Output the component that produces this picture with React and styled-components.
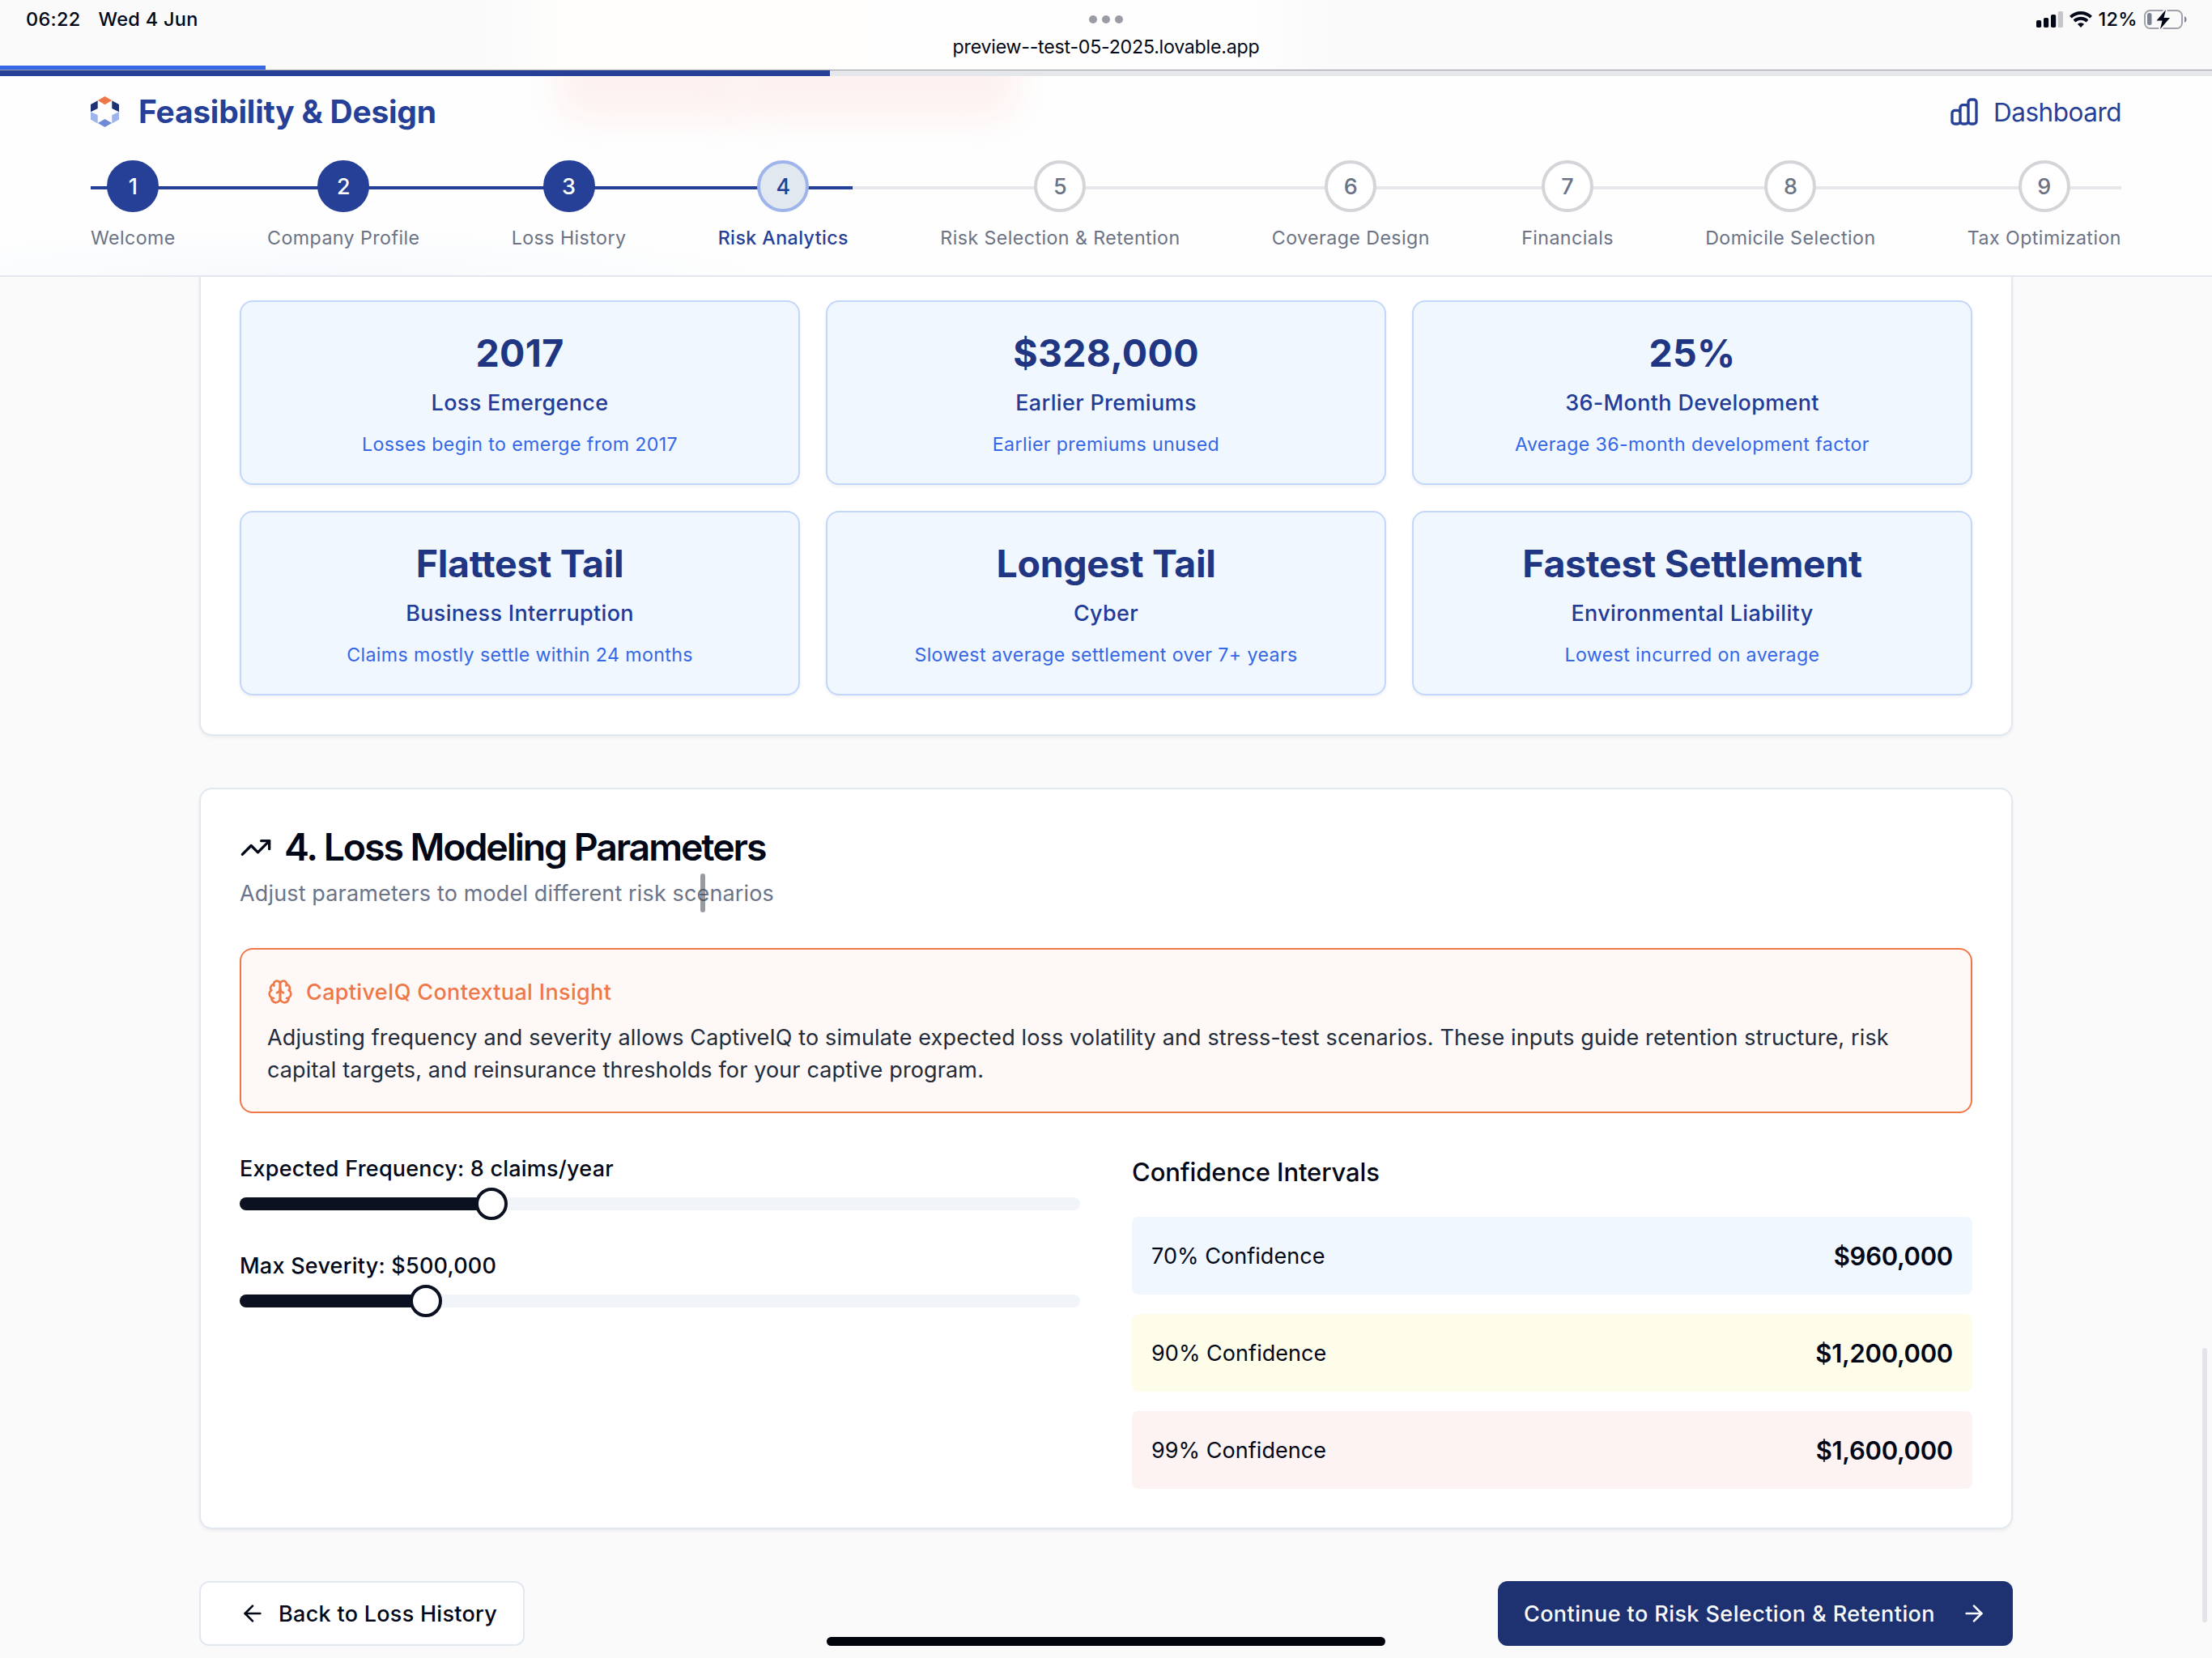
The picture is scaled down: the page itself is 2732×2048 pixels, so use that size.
import React from "react";
import styled, { createGlobalStyle } from "styled-components";
import { TrendingUp, ArrowLeft, ArrowRight } from "lucide-react";

const GlobalStyle = createGlobalStyle`
  * { box-sizing: border-box; }
  html, body { margin: 0; padding: 0; }
  body {
    width: 2732px;
    height: 2048px;
    overflow: hidden;
    background: #fafafa;
    color: #020817;
    font-family: Inter, Roboto, "Liberation Sans", sans-serif;
  }
  h1, h2, h3, p { margin: 0; font-weight: inherit; }
  svg { display: block; flex: none; }
`;

const Screen = styled.div`
  position: relative;
  width: 2732px;
  height: 2048px;
  overflow: hidden;
  display: flex;
  flex-direction: column;
`;

/* ---------- Status bar ---------- */
const StatusBar = styled.div`
  position: relative;
  height: 87px;
  flex: none;
  display: grid;
  grid-template-columns: 1fr auto 1fr;
  padding: 0 30px;
  background: linear-gradient(90deg, #fafafa 0, #fafafa 600px, #fffefd 700px, #fffefe 1540px, #fafafa 1640px);
  border-bottom: 1px solid #999ca5;
`;
const StatusText = styled.div`
  font-size: 23.5px;
  font-weight: 500;
  line-height: 48px;
  letter-spacing: 0.3px;
  white-space: pre;
`;
const StatusLeft = styled.div`
  display: flex;
  gap: 22px;
  padding-left: 2px;
`;
const StatusCenter = styled.div`
  display: flex;
  flex-direction: column;
  align-items: center;
`;
const Dots = styled.div`
  display: flex;
  gap: 6px;
  padding-top: 19px;
`;
const Dot = styled.i`
  width: 10px;
  height: 10px;
  border-radius: 50%;
  background: #9a9ca5;
`;
const Url = styled.div`
  margin-top: 13px;
  font-size: 23.2px;
  line-height: 32px;
  letter-spacing: -0.24px;
`;
const StatusRight = styled.div`
  display: flex;
  justify-content: flex-end;
  align-items: center;
  gap: 8px;
  height: 48px;
`;
const LoadBar = styled.div`
  position: absolute;
  left: 0;
  bottom: 0;
  width: 328px;
  height: 5px;
  background: #3567e6;
`;

/* ---------- Header ---------- */
const Header = styled.header`
  position: relative;
  height: 255px;
  flex: none;
  overflow: hidden;
  border-bottom: 2px solid #e2e7f0;
  background: radial-gradient(ellipse 620px 60px at 380px 255px, #f6f9fc, rgba(255, 255, 255, 0)), #fefefe;
`;
const Glow = styled.div`
  position: absolute;
  left: ${(p) => p.$x}px;
  top: -60px;
  width: ${(p) => p.$w}px;
  height: 120px;
  border-radius: 30px;
  background: #fdf2f0;
  filter: blur(20px);
`;
const Progress = styled.div`
  position: relative;
  height: 7px;
  background: #e5e7eb;
`;
const ProgressFill = styled.div`
  width: 37.5%;
  height: 100%;
  background: #263f97;
`;
const HeaderBody = styled.div`
  position: relative;
  padding: 16px 112px 0;
`;
const Brand = styled.div`
  display: flex;
  align-items: center;
  justify-content: space-between;
  height: 56px;
  color: #263f97;
`;
const BrandGroup = styled.div`
  display: flex;
  align-items: center;
  gap: ${(p) => p.$gap}px;
`;
const BrandTitle = styled.h1`
  padding-bottom: 2px;
  font-size: 39px;
  font-weight: 700;
  letter-spacing: -0.25px;
`;
const DashboardText = styled.span`
  font-size: 31.5px;
  letter-spacing: -0.5px;
`;
const Steps = styled.nav`
  position: relative;
  display: flex;
  justify-content: space-between;
  margin-top: 32px;
`;
const StepLine = styled.div`
  position: absolute;
  top: 32px;
  left: 0;
  height: 4px;
  width: ${(p) => p.$width};
  background: ${(p) => p.$color};
`;
const Step = styled.div`
  position: relative;
  display: flex;
  flex-direction: column;
  align-items: center;
  gap: 16px;
`;
const tones = {
  done: ["#263f97", "#263f97", "#ffffff"],
  current: ["#9fb4ea", "#e2e8f0", "#263f97"],
  todo: ["#d4d4d9", "#ffffff", "#6b7385"],
};
const StepCircle = styled.div`
  display: flex;
  align-items: center;
  justify-content: center;
  width: 64px;
  height: 64px;
  border-radius: 50%;
  border: 4px solid ${(p) => tones[p.$state][0]};
  background: ${(p) => tones[p.$state][1]};
  color: ${(p) => tones[p.$state][2]};
  font-size: 27px;
  font-weight: 500;
`;
const StepLabel = styled.span`
  font-size: 23.2px;
  line-height: 32px;
  white-space: nowrap;
  letter-spacing: 0.43px;
  font-weight: ${(p) => (p.$state === "current" ? 500 : 400)};
  color: ${(p) => (p.$state === "current" ? "#263f97" : "#6b7385")};
`;

/* ---------- Content ---------- */
const Main = styled.main`
  display: flex;
  flex-direction: column;
  gap: 64px;
  padding: 0 246px;
`;
const Card = styled.section`
  border: 2px solid #e2e8f0;
  border-radius: 16px;
  background: #ffffff;
  padding: 48px;
  box-shadow: 0 2px 4px rgba(15, 23, 42, 0.06);
`;
const ScrolledCard = styled(Card)`
  border-top: 0;
  border-radius: 0 0 16px 16px;
  padding-top: 29px;
`;
const StatGrid = styled.div`
  display: grid;
  grid-template-columns: repeat(3, 1fr);
  gap: 32px;
`;
const Stat = styled.article`
  display: flex;
  flex-direction: column;
  align-items: center;
  height: 228px;
  padding: 31px 32px 32px;
  border: 2px solid #c2d7fa;
  border-radius: 16px;
  background: #f0f7ff;
  box-shadow: 0 2px 4px rgba(15, 23, 42, 0.06);
`;
const StatValue = styled.div`
  font-size: 46.5px;
  font-weight: 700;
  line-height: 64px;
  letter-spacing: ${(p) => (p.$numeric ? 0.3 : -0.3)}px;
  color: #203682;
`;
const StatName = styled.div`
  margin-top: 10px;
  font-size: 27px;
  font-weight: 500;
  line-height: 40px;
  letter-spacing: 0.33px;
  color: #223c98;
`;
const StatNote = styled.div`
  margin-top: 15px;
  font-size: 23.2px;
  line-height: 32px;
  letter-spacing: 0.37px;
  color: #3567e6;
`;
const TitleRow = styled.div`
  display: flex;
  align-items: center;
  gap: 15px;
  height: 48px;
`;
const CardTitle = styled.h2`
  padding-bottom: 2px;
  font-size: 46.5px;
  font-weight: 600;
  line-height: 46px;
  letter-spacing: -2.12px;
`;
const CardText = styled.p`
  margin-top: 13px;
  font-size: 27px;
  line-height: 40px;
  letter-spacing: 0.145px;
  color: #6b7488;
`;
const Insight = styled.div`
  height: 204px;
  margin-top: 47px;
  padding: 32px;
  border: 2px solid #ef7848;
  border-radius: 16px;
  background: #fef8f6;
`;
const InsightHead = styled.div`
  display: flex;
  align-items: center;
  gap: 16px;
  height: 40px;
  color: #ef7848;
`;
const InsightTitle = styled.h3`
  padding-top: 2px;
  font-size: 27px;
  font-weight: 500;
  line-height: 40px;
  letter-spacing: 0.33px;
`;
const InsightText = styled.p`
  margin-top: 17px;
  font-size: 27px;
  line-height: 40px;
  letter-spacing: 0.135px;
  white-space: nowrap;
  color: #222c3b;
`;
const Columns = styled.div`
  display: grid;
  grid-template-columns: 1fr 1fr;
  gap: 64px;
  margin-top: 48px;
`;
const Sliders = styled.div`
  display: flex;
  flex-direction: column;
  gap: 36px;
`;
const SliderLabel = styled.div`
  padding-top: 1px;
  margin-bottom: 3px;
  font-size: 27px;
  font-weight: 500;
  line-height: 40px;
  letter-spacing: 0.23px;
`;
const SliderBody = styled.div`
  position: relative;
  display: flex;
  align-items: center;
  height: 40px;
`;
const Track = styled.div`
  width: 100%;
  height: 16px;
  border-radius: 8px;
  overflow: hidden;
  background: #f1f4f9;
`;
const Range = styled.div`
  height: 100%;
  background: #0b1120;
`;
const Thumb = styled.div`
  position: absolute;
  top: 0;
  width: 40px;
  height: 40px;
  border-radius: 50%;
  border: 4px solid #0b1120;
  background: #ffffff;
`;
const Intervals = styled.div`
  display: flex;
  flex-direction: column;
  gap: 24px;
`;
const IntervalsTitle = styled.h3`
  padding-top: 1px;
  margin-bottom: 7px;
  font-size: 31px;
  font-weight: 500;
  line-height: 48px;
  letter-spacing: -0.1px;
`;
const Interval = styled.div`
  display: flex;
  align-items: center;
  justify-content: space-between;
  height: 96px;
  padding: 0 24px;
  border-radius: 8px;
  background: ${(p) => p.$bg};
`;
const IntervalName = styled.span`
  font-size: 27px;
  letter-spacing: 0.05px;
`;
const IntervalValue = styled.span`
  font-size: 31px;
  font-weight: 600;
  letter-spacing: -0.32px;
`;
const Actions = styled.div`
  display: flex;
  justify-content: space-between;
`;
const Button = styled.button`
  display: flex;
  align-items: center;
  justify-content: flex-end;
  gap: ${(p) => (p.$primary ? 32 : 16)}px;
  width: ${(p) => (p.$primary ? 636 : 402)}px;
  height: 80px;
  padding: 0 32px;
  border: ${(p) => (p.$primary ? "0" : "2px solid #e2e8f0")};
  border-radius: 12px;
  background: ${(p) => (p.$primary ? "#1e3170" : "#ffffff")};
  color: ${(p) => (p.$primary ? "#f8fafc" : "#020817")};
  font-family: inherit;
  font-size: 27px;
  font-weight: 500;
  letter-spacing: ${(p) => (p.$primary ? 0.42 : 0.28)}px;
  white-space: nowrap;
`;

/* ---------- System overlays ---------- */
const HomeIndicator = styled.div`
  position: absolute;
  left: 1021px;
  top: 2022px;
  width: 690px;
  height: 11px;
  border-radius: 6px;
  background: #02040c;
`;
const ScrollThumb = styled.div`
  position: absolute;
  left: 2720px;
  top: 1665px;
  width: 6px;
  height: 339px;
  border-radius: 3px;
  background: #e3e4ea;
`;
const TextCursor = styled.div`
  position: absolute;
  left: 865px;
  top: 1079px;
  width: 6px;
  height: 48px;
  border-radius: 3px;
  background: rgba(70, 72, 85, 0.55);
`;

const Logo = () => (
  <svg width="35" height="38" viewBox="0 0 35 38">
    <path fill="#f07645" d="M17.5 0 26.2 5l-8.700 5.300L8.800 5z" />
    <path fill="#1f3175" d="M0 10 8.700 5.200v9.900L0 19.300zM35 10l-8.700-4.800v9.900l8.700 4.200z" />
    <path fill="#9fb4ea" d="M0 19.300l8.700 3.700v10.500L0 28.700zM35 19.300l-8.700 3.700v10.500l8.700-4.800z" />
    <path fill="#6f8bd8" d="M17.500 28 26.200 33l-8.700 5-8.700-5z" />
  </svg>
);

const ChartIcon = () => (
  <svg width="40" height="40" viewBox="0 0 24 24" fill="none" stroke="currentColor" strokeWidth="2" strokeLinecap="round" strokeLinejoin="round">
    <path d="M9 19v-6a2 2 0 00-2-2H5a2 2 0 00-2 2v6a2 2 0 002 2h2a2 2 0 002-2zm0 0V9a2 2 0 012-2h2a2 2 0 012 2v10m-6 0a2 2 0 002 2h2a2 2 0 002-2m0 0V5a2 2 0 012-2h2a2 2 0 012 2v14a2 2 0 01-2 2h-2a2 2 0 01-2-2z" />
  </svg>
);

const BrainIcon = () => (
  <svg width="32" height="32" viewBox="0 0 24 24" fill="none" stroke="currentColor" strokeWidth="2" strokeLinecap="round" strokeLinejoin="round">
    <path d="M12 5a3 3 0 1 0-5.997.125 4 4 0 0 0-2.526 5.77 4 4 0 0 0 .556 6.588A4 4 0 1 0 12 18Z" />
    <path d="M12 5a3 3 0 1 1 5.997.125 4 4 0 0 1 2.526 5.77 4 4 0 0 1-.556 6.588A4 4 0 1 1 12 18Z" />
    <path d="M15 13a4.500 4.500 0 0 1-3-4 4.500 4.500 0 0 1-3 4" />
    <path d="M17.599 6.500a3 3 0 0 0 .399-1.375M6.003 5.125A3 3 0 0 0 6.401 6.500M3.477 10.896a4 4 0 0 1 .585-.396M19.938 10.500a4 4 0 0 1 .585.396M6 18a4 4 0 0 1-1.967-.516M19.967 17.484A4 4 0 0 1 18 18" />
  </svg>
);

const SignalIcon = () => (
  <svg width="33" height="20" viewBox="0 0 33 20" fill="#020817">
    <rect x="0" y="11" width="6.200" height="9" rx="1.800" />
    <rect x="9" y="8" width="6.200" height="12" rx="1.800" />
    <rect x="18" y="4" width="6.200" height="16" rx="1.800" />
    <rect x="26.800" y="0" width="6.200" height="20" rx="1.800" fill="#c5c5ca" />
  </svg>
);

const WifiIcon = () => (
  <svg width="28" height="20" viewBox="0 0 28 20" fill="none" stroke="#020817" strokeWidth="3.900">
    <path d="M1.400 7.200C8.400.300 19.600.300 26.600 7.200" />
    <path d="M6 12c4.400-4.300 11.600-4.300 16 0" />
    <path d="M14 20l-4-4.200c2.200-2 5.800-2 8 0z" fill="#020817" stroke="none" />
  </svg>
);

const BatteryIcon = () => (
  <svg width="54" height="26" viewBox="0 0 54 26">
    <rect x="1" y="2" width="46" height="22" rx="6.500" fill="none" stroke="#a0a3ac" strokeWidth="2" />
    <rect x="4" y="5" width="5.500" height="15" rx="2.500" fill="#7d8393" />
    <path d="M50 9c3.300 1.300 3.300 6.700 0 8z" fill="#7d8393" />
    <path d="M27 1 15.500 14.500h7L20 25 32 11h-7.500z" fill="#020817" stroke="#fafafa" strokeWidth="4" paintOrder="stroke" />
  </svg>
);

const steps = ["Welcome", "Company Profile", "Loss History", "Risk Analytics", "Risk Selection & Retention", "Coverage Design", "Financials", "Domicile Selection", "Tax Optimization"];
const stateOf = (i) => (i < 3 ? "done" : i === 3 ? "current" : "todo");

const stats = [
  ["2017", "Loss Emergence", "Losses begin to emerge from 2017"],
  ["$328,000", "Earlier Premiums", "Earlier premiums unused"],
  ["25%", "36-Month Development", "Average 36-month development factor"],
  ["Flattest Tail", "Business Interruption", "Claims mostly settle within 24 months"],
  ["Longest Tail", "Cyber", "Slowest average settlement over 7+ years"],
  ["Fastest Settlement", "Environmental Liability", "Lowest incurred on average"],
];

const sliders = [
  { label: "Expected Frequency: 8 claims/year", value: 7 / 24 },
  { label: "Max Severity: $500,000", value: 4 / 19 },
];

const intervals = [
  ["70% Confidence", "$960,000", "#f0f7ff"],
  ["90% Confidence", "$1,200,000", "#fefdea"],
  ["99% Confidence", "$1,600,000", "#fcf3f2"],
];

export default function App() {
  return (
    <Screen>
      <GlobalStyle />
      <StatusBar>
        <StatusLeft>
          <StatusText>06:22</StatusText>
          <StatusText>Wed 4 Jun</StatusText>
        </StatusLeft>
        <StatusCenter>
          <Dots><Dot /><Dot /><Dot /></Dots>
          <Url>preview--test-05-2025.lovable.app</Url>
        </StatusCenter>
        <StatusRight>
          <SignalIcon />
          <WifiIcon />
          <StatusText>12%</StatusText>
          <BatteryIcon />
        </StatusRight>
        <LoadBar />
      </StatusBar>

      <Header>
        <Glow $x={688} $w={240} />
        <Glow $x={905} $w={352} />
        <Progress><ProgressFill /></Progress>
        <HeaderBody>
          <Brand>
            <BrandGroup $gap={24}>
              <Logo />
              <BrandTitle>Feasibility &amp; Design</BrandTitle>
            </BrandGroup>
            <BrandGroup $gap={16}>
              <ChartIcon />
              <DashboardText>Dashboard</DashboardText>
            </BrandGroup>
          </Brand>
          <Steps>
            <StepLine $width="100%" $color="#e5e7eb" />
            <StepLine $width="37.5%" $color="#263f97" />
            {steps.map((name, i) => (
              <Step key={name}>
                <StepCircle $state={stateOf(i)}>{i + 1}</StepCircle>
                <StepLabel $state={stateOf(i)}>{name}</StepLabel>
              </Step>
            ))}
          </Steps>
        </HeaderBody>
      </Header>

      <Main>
        <ScrolledCard>
          <StatGrid>
            {stats.map(([value, name, note]) => (
              <Stat key={value}>
                <StatValue $numeric={/\d/.test(value)}>{value}</StatValue>
                <StatName>{name}</StatName>
                <StatNote>{note}</StatNote>
              </Stat>
            ))}
          </StatGrid>
        </ScrolledCard>

        <Card>
          <TitleRow>
            <TrendingUp size={40} />
            <CardTitle>4. Loss Modeling Parameters</CardTitle>
          </TitleRow>
          <CardText>Adjust parameters to model different risk scenarios</CardText>
          <Insight>
            <InsightHead>
              <BrainIcon />
              <InsightTitle>CaptiveIQ Contextual Insight</InsightTitle>
            </InsightHead>
            <InsightText>
              Adjusting frequency and severity allows CaptiveIQ to simulate expected loss volatility and stress-test scenarios. These inputs guide retention structure, risk
              <br />
              capital targets, and reinsurance thresholds for your captive program.
            </InsightText>
          </Insight>
          <Columns>
            <Sliders>
              {sliders.map(({ label, value }) => (
                <div key={label}>
                  <SliderLabel>{label}</SliderLabel>
                  <SliderBody>
                    <Track><Range style={{ width: `${value * 100}%` }} /></Track>
                    <Thumb style={{ left: `calc((100% - 40px) * ${value})` }} />
                  </SliderBody>
                </div>
              ))}
            </Sliders>
            <Intervals>
              <IntervalsTitle>Confidence Intervals</IntervalsTitle>
              {intervals.map(([name, value, bg]) => (
                <Interval key={name} $bg={bg}>
                  <IntervalName>{name}</IntervalName>
                  <IntervalValue>{value}</IntervalValue>
                </Interval>
              ))}
            </Intervals>
          </Columns>
        </Card>

        <Actions>
          <Button>
            <ArrowLeft size={32} />
            Back to Loss History
          </Button>
          <Button $primary>
            Continue to Risk Selection &amp; Retention
            <ArrowRight size={32} />
          </Button>
        </Actions>
      </Main>

      <TextCursor />
      <ScrollThumb />
      <HomeIndicator />
    </Screen>
  );
}
